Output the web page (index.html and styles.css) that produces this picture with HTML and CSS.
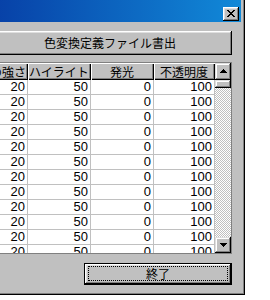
FILE: index.html
```html
<!DOCTYPE html>
<html lang="ja">
<head>
  <meta charset="UTF-8" />
  <title>色変換定義</title>
  <link rel="stylesheet" href="styles.css">
</head>
<body>

<div class="window">
  <div class="titlebar">
    <button class="close" type="button" aria-label="閉じる">
      <svg width="8" height="7" viewBox="0 0 8 7" shape-rendering="crispEdges">
        <path d="M0 0h2v1H0zM6 0h2v1H6zM1 1h2v1H1zM5 1h2v1H5zM2 2h4v1H2zM3 3h2v1H3zM2 4h4v1H2zM1 5h2v1H1zM5 5h2v1H5zM0 6h2v1H0zM6 6h2v1H6z" fill="#000"/>
      </svg>
    </button>
  </div>

  <div class="content">
    <button class="btn btn-export" type="button">色変換定義ファイル書出</button>

    <div class="list">
      <div class="grid">
        <div class="row head">
          <span class="c1"><em>影の強さ</em></span>
          <span class="c2">ハイライト</span>
          <span class="c3">発光</span>
          <span class="c4">不透明度</span>
        </div>
        <div class="row"><span class="c1">20</span><span class="c2">50</span><span class="c3">0</span><span class="c4">100</span></div>
        <div class="row"><span class="c1">20</span><span class="c2">50</span><span class="c3">0</span><span class="c4">100</span></div>
        <div class="row"><span class="c1">20</span><span class="c2">50</span><span class="c3">0</span><span class="c4">100</span></div>
        <div class="row"><span class="c1">20</span><span class="c2">50</span><span class="c3">0</span><span class="c4">100</span></div>
        <div class="row"><span class="c1">20</span><span class="c2">50</span><span class="c3">0</span><span class="c4">100</span></div>
        <div class="row"><span class="c1">20</span><span class="c2">50</span><span class="c3">0</span><span class="c4">100</span></div>
        <div class="row"><span class="c1">20</span><span class="c2">50</span><span class="c3">0</span><span class="c4">100</span></div>
        <div class="row"><span class="c1">20</span><span class="c2">50</span><span class="c3">0</span><span class="c4">100</span></div>
        <div class="row"><span class="c1">20</span><span class="c2">50</span><span class="c3">0</span><span class="c4">100</span></div>
        <div class="row"><span class="c1">20</span><span class="c2">50</span><span class="c3">0</span><span class="c4">100</span></div>
        <div class="row"><span class="c1">20</span><span class="c2">50</span><span class="c3">0</span><span class="c4">100</span></div>
        <div class="row"><span class="c1">20</span><span class="c2">50</span><span class="c3">0</span><span class="c4">100</span></div>
      </div>

      <div class="vscroll">
        <div class="sb-btn sb-up">
          <svg width="7" height="4" viewBox="0 0 7 4" shape-rendering="crispEdges">
            <path d="M3 0h1v1H3zM2 1h3v1H2zM1 2h5v1H1zM0 3h7v1H0z" fill="#000"/>
          </svg>
        </div>
        <div class="thumb"></div>
        <div class="track"></div>
        <div class="sb-btn sb-down">
          <svg width="7" height="4" viewBox="0 0 7 4" shape-rendering="crispEdges">
            <path d="M0 0h7v1H0zM1 1h5v1H1zM2 2h3v1H2zM3 3h1v1H3z" fill="#000"/>
          </svg>
        </div>
      </div>
    </div>

    <div class="footer">
      <button class="btn btn-default" type="button"><span class="focus">終了</span></button>
    </div>
  </div>
</div>

</body>
</html>
```

FILE: styles.css
```css
* { margin: 0; padding: 0; box-sizing: border-box; }

body {
  background: #fff;
  font-family: "Noto Sans CJK JP", "Liberation Sans", sans-serif;
  font-size: 12px;
  color: #000;
  overflow: hidden;
}

.window {
  width: 285px;
  height: 295px;
  margin-left: -40px;
  padding-right: 3px;
  background: #c0c0c0;
  border-right: 1px solid #000;
  border-bottom: 1px solid #000;
  box-shadow: inset -1px -1px #808080;
  display: flex;
  flex-direction: column;
}

.titlebar {
  height: 22px;
  padding: 7px 2px 0 0;
  background: linear-gradient(to right, #0636a0, #1189d8);
  display: flex;
  justify-content: flex-end;
  align-items: flex-start;
}

.close {
  width: 16px;
  height: 14px;
  border: none;
  background: #c0c0c0;
  box-shadow: inset -1px -1px #000, inset 1px 1px #fff, inset -2px -2px #808080, inset 2px 2px #dfdfdf;
  display: flex;
  justify-content: center;
  align-items: center;
  padding: 0 1px 1px 0;
}

.content {
  flex: 1;
  padding: 9px 9px 0 28px;
  display: flex;
  flex-direction: column;
}

.btn {
  font-family: "Noto Sans CJK JP", sans-serif;
  font-size: 12px;
  color: #000;
  background: #c0c0c0;
  border: none;
  box-shadow: inset -1px -1px #000, inset 1px 1px #fff, inset -2px -2px #808080, inset 2px 2px #dfdfdf;
}

.btn-export {
  height: 24px;
  width: 100%;
  line-height: 22px;
}

.list {
  margin-top: 7px;
  height: 192px;
  border: 1px solid #808080;
  background: #fff;
  display: flex;
}

.grid {
  flex: 1;
  overflow: hidden;
}

.row {
  display: flex;
  height: 15px;
}

.row span {
  flex: none;
  height: 15px;
  border-right: 1px solid #c0c0c0;
  border-bottom: 1px solid #c0c0c0;
  text-align: right;
  padding-right: 2px;
  font-family: "Liberation Sans", sans-serif;
  font-size: 13px;
  line-height: 14px;
  white-space: nowrap;
  overflow: hidden;
}

.c1 { width: 39px; }
.c2 { width: 63px; }
.c3 { width: 63px; }
.c4 { width: 61px; }

.row.head { height: 17px; }

.row.head span {
  height: 17px;
  border: none;
  background: #c0c0c0;
  box-shadow: inset 1px 1px #fff, inset -1px -1px #000, inset -2px -2px #808080;
  font-family: "Noto Sans CJK JP", sans-serif;
  font-size: 12px;
  line-height: 17px;
  text-align: center;
  padding: 0 1px 0 0;
}

.row.head .c1 {
  display: flex;
  justify-content: flex-end;
  padding-right: 2px;
}

.row.head .c1 em {
  flex: none;
  font-style: normal;
}

.vscroll {
  width: 16px;
  display: flex;
  flex-direction: column;
}

.sb-btn,
.thumb {
  background: #c0c0c0;
  box-shadow: inset -1px -1px #000, inset 1px 1px #dfdfdf, inset -2px -2px #808080, inset 2px 2px #fff;
}

.sb-btn {
  display: flex;
  justify-content: center;
  align-items: center;
  padding-bottom: 1px;
}

.sb-up { height: 17px; }
.sb-down { height: 16px; }

.thumb { height: 8px; }

.track {
  flex: 1;
  background-color: #fff;
  background-image: conic-gradient(#c0c0c0 25%, #fff 0 50%, #c0c0c0 0 75%, #fff 0);
  background-size: 2px 2px;
}

.footer {
  margin-top: 9px;
  display: flex;
  justify-content: flex-end;
}

.btn-default {
  width: 148px;
  height: 22px;
  border: 1px solid #000;
  padding: 2px 3px 3px 3px;
  display: flex;
}

.focus {
  flex: 1;
  border: 1px dotted #000;
  line-height: 13px;
}
```
